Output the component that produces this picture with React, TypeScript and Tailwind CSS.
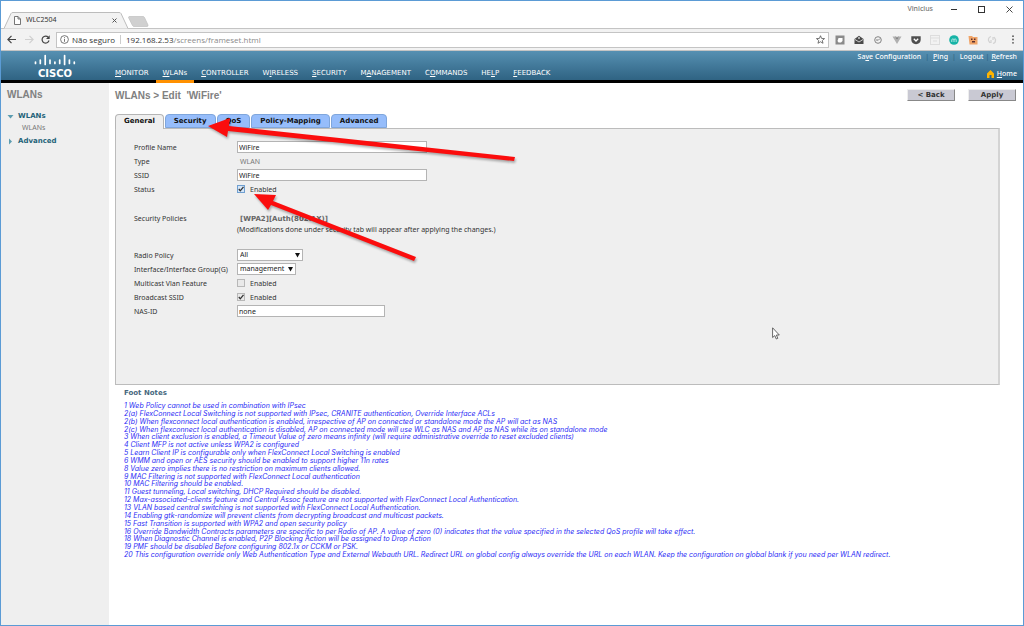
import { useState } from "react";
import type { ReactNode } from "react";

const navItems = [
  { before: "", key: "M", after: "ONITOR" },
  { before: "", key: "W", after: "LANs", active: true },
  { before: "", key: "C", after: "ONTROLLER" },
  { before: "W", key: "I", after: "RELESS" },
  { before: "", key: "S", after: "ECURITY" },
  { before: "M", key: "A", after: "NAGEMENT" },
  { before: "C", key: "O", after: "MMANDS" },
  { before: "HE", key: "L", after: "P" },
  { before: "", key: "F", after: "EEDBACK" },
];

const tabs = ["General", "Security", "QoS", "Policy-Mapping", "Advanced"];

const footNotes = [
  "1 Web Policy cannot be used in combination with IPsec",
  "2(a) FlexConnect Local Switching is not supported with IPsec, CRANITE authentication, Override Interface ACLs",
  "2(b) When flexconnect local authentication is enabled, irrespective of AP on connected or standalone mode the AP will act as NAS",
  "2(c) When flexconnect local authentication is disabled, AP on connected mode will use WLC as NAS and AP as NAS while its on standalone mode",
  "3 When client exclusion is enabled, a Timeout Value of zero means infinity (will require administrative override to reset excluded clients)",
  "4 Client MFP is not active unless WPA2 is configured",
  "5 Learn Client IP is configurable only when FlexConnect Local Switching is enabled",
  "6 WMM and open or AES security should be enabled to support higher 11n rates",
  "8 Value zero implies there is no restriction on maximum clients allowed.",
  "9 MAC Filtering is not supported with FlexConnect Local authentication",
  "10 MAC Filtering should be enabled.",
  "11 Guest tunneling, Local switching, DHCP Required should be disabled.",
  "12 Max-associated-clients feature and Central Assoc feature are not supported with FlexConnect Local Authentication.",
  "13 VLAN based central switching is not supported with FlexConnect Local Authentication.",
  "14 Enabling gtk-randomize will prevent clients from decrypting broadcast and multicast packets.",
  "15 Fast Transition is supported with WPA2 and open security policy",
  "16 Override Bandwidth Contracts parameters are specific to per Radio of AP. A value of zero (0) indicates that the value specified in the selected QoS profile will take effect.",
  "18 When Diagnostic Channel is enabled, P2P Blocking Action will be assigned to Drop Action",
  "19 PMF should be disabled Before configuring 802.1x or CCKM or PSK.",
  "20 This configuration override only Web Authentication Type and External Webauth URL. Redirect URL on global config always override the URL on each WLAN. Keep the configuration on global blank if you need per WLAN redirect.",
];

const TitleBar = () => (
  <div className="flex h-[27px] justify-between">
    <div className="flex items-end">
      <div className="relative z-10 -mb-px ml-[3px] h-[17px] w-[124px]">
        <svg className="absolute inset-0" width="124" height="17" viewBox="0 0 124 17">
          <path d="M0 16.5 L7 1.5 Q7.500 .5 9 .5 H115 Q116.500 .5 117 1.500 L124 16.500" fill="#f2f2f2" stroke="#bcbcbc" />
        </svg>
        <div className="relative flex h-full items-center pl-[10px] pr-[11px]">
          <svg width="7" height="9" viewBox="0 0 7 9" fill="#fff" stroke="#666" strokeWidth=".9">
            <path d="M.5 .5 H4 L6.500 3 V8.500 H.5 Z M4 .5 V3 H6.500" />
          </svg>
          <span className="ml-[5px] flex-1 text-[7px] text-[#333]">WLC2504</span>
          <button type="button" aria-label="Close tab">
            <svg width="5" height="5" viewBox="0 0 5 5" stroke="#555">
              <path d="M.5 .5 L4.500 4.500 M4.500 .5 L.5 4.500" />
            </svg>
          </button>
        </div>
      </div>
      <button type="button" aria-label="New tab" className="mb-[1px]">
        <svg width="21" height="11" viewBox="0 0 21 11">
          <path d="M1 .5 H15 Q16 .5 16.500 1.500 L20 9 Q20.300 10.500 19 10.500 H6 Q5 10.500 4.500 9.500 L.5 1.500 Z" fill="#d0d0d0" stroke="#c0c0c0" strokeWidth=".7" />
        </svg>
      </button>
    </div>
    <div className="flex h-[17px] items-center pr-[10px] text-[#333]">
      <span className="mr-[18px] text-[7px] font-medium text-[#777]">Vinicius</span>
      <button type="button" aria-label="Minimize" className="mr-[21px]">
        <svg width="6" height="7" viewBox="0 0 6 7" stroke="#333"><path d="M0 3.500 H6" /></svg>
      </button>
      <button type="button" aria-label="Maximize" className="mr-[21px]">
        <svg width="7" height="7" viewBox="0 0 7 7" stroke="#333" fill="none"><rect x=".5" y=".5" width="6" height="6" /></svg>
      </button>
      <button type="button" aria-label="Close">
        <svg width="7" height="7" viewBox="0 0 7 7" stroke="#333" strokeWidth=".9"><path d="M.5 .5 L6.500 6.500 M6.500 .5 L.5 6.500" /></svg>
      </button>
    </div>
  </div>
);

const extensions: { name: string; art: ReactNode }[] = [
  {
    name: "Notes",
    art: (
      <>
        <rect x=".5" y=".5" width="9" height="9" fill="#8a8a8a" />
        <path d="M3.500 3 H7.500 V6 L6 7.500 H3.500 L2.500 6 Z" fill="#fff" />
      </>
    ),
  },
  {
    name: "Mail",
    art: (
      <>
        <path d="M.5 4 L5 .8 L9.500 4 V9 H.5 Z" fill="#4a4a4a" />
        <path d="M1 4.500 L5 7 L9 4.500" stroke="#eee" strokeWidth=".8" fill="none" />
        <circle cx="5" cy="3" r="1" fill="#ccc" />
      </>
    ),
  },
  {
    name: "Speed",
    art: (
      <g fill="none" stroke="#777" strokeWidth=".9">
        <circle cx="5" cy="5" r="3.300" />
        <path d="M5 5.500 L7 3.500 M3 5 H5" />
      </g>
    ),
  },
  {
    name: "Vue",
    art: (
      <>
        <path d="M.5 1.500 H3 L5 5 L7 1.500 H9.500 L5 9 Z" fill="#b0b0b0" />
        <path d="M3 1.500 H4.200 L5 3 L5.800 1.500 H7 L5 5 Z" fill="#777" />
      </>
    ),
  },
  {
    name: "Pocket",
    art: (
      <>
        <path d="M.3 1.300 H9.700 V5 Q9.300 8.800 5 9.200 Q.7 8.800 .3 5 Z" fill="#4f4f4f" />
        <path d="M2.800 3.800 L5 6 L7.200 3.800" stroke="#fff" strokeWidth="1.300" fill="none" />
      </>
    ),
  },
  {
    name: "Calendar",
    art: (
      <g fill="none" stroke="#ddd">
        <rect x=".5" y=".5" width="9" height="9" />
        <path d="M.5 3 H9.500 M3 6 H7" />
      </g>
    ),
  },
  {
    name: "Momentum",
    art: (
      <>
        <circle cx="5" cy="5" r="4.800" fill="#16b3a6" />
        <path d="M2.800 7 V4.500 Q3.900 3.200 5 4.500 V7 M5 4.500 Q6.100 3.200 7.200 4.500 V7" stroke="#d8f5f2" strokeWidth=".8" fill="none" />
      </>
    ),
  },
  {
    name: "Avatar",
    art: (
      <>
        <path d="M.5 1 H4 L5 2 H9.500 V9.500 H1.500 Z" fill="#f0a468" />
        <path d="M3 3.500 H4.500 V5 H3 Z M6 3.500 H7.500 V5 H6 Z M4 6 H7 V7.500 H4 Z" fill="#5a3030" />
      </>
    ),
  },
  {
    name: "Sync",
    art: (
      <path d="M4 1.500 Q1 2.500 1.500 5.500 L3 8 M6 8.500 Q9 7.500 8.500 4.500 L7 2 M6 2 V5 M4 5 V8" stroke="#d2d2d2" strokeWidth="1.200" fill="none" />
    ),
  },
];

const AddressBar = () => (
  <div className="flex h-[23px] items-center border-y border-[#c4c4c4] bg-[#f2f2f2] pl-[6px] pr-[8px]">
    <button type="button" aria-label="Back" className="mr-[9px]">
      <svg width="9" height="9" viewBox="0 0 9 9" stroke="#444" strokeWidth="1.200" fill="none"><path d="M9 4.500 H1 M4.500 .8 L.9 4.500 L4.500 8.200" /></svg>
    </button>
    <button type="button" aria-label="Forward" className="mr-[7px]">
      <svg width="9" height="9" viewBox="0 0 9 9" stroke="#d0d0d0" strokeWidth="1.200" fill="none"><path d="M0 4.500 H8 M4.500 .8 L8.100 4.500 L4.500 8.200" /></svg>
    </button>
    <button type="button" aria-label="Reload" className="mr-[6px]">
      <svg width="9" height="9" viewBox="0 0 9 9" fill="none">
        <path d="M7.300 2.300 A3.500 3.500 0 1 0 8 5.500" stroke="#444" strokeWidth="1.200" />
        <path d="M8.700 .3 V4 H5 Z" fill="#444" />
      </svg>
    </button>
    <div className="flex h-[16px] flex-1 items-center border border-[#c4c4c4] bg-white px-[3px] font-['Open_Sans',sans-serif] text-[8px] text-[#333]">
      <svg className="mr-[3px]" width="9" height="9" viewBox="0 0 9 9" fill="none" stroke="#555" strokeWidth=".8">
        <circle cx="4.500" cy="4.500" r="3.900" />
        <path d="M4.500 4 V6.800 M4.500 2.200 V3.200" />
      </svg>
      <span>Não seguro</span>
      <span className="mx-[5px] h-[9px] border-l border-[#ccc]" />
      <span className="flex-1">
        192.168.2.53<span className="text-[#8a8a8a]">/screens/frameset.html</span>
      </span>
      <svg width="9" height="9" viewBox="0 0 10 10" fill="none" stroke="#555" strokeWidth=".9">
        <path d="M5 .8 L6.200 3.800 L9.500 4 L7 6.100 L7.800 9.200 L5 7.500 L2.200 9.200 L3 6.100 L.5 4 L3.800 3.800 Z" />
      </svg>
    </div>
    <div className="ml-[6px] flex items-center gap-[9px]">
      {extensions.map(ext => (
        <button type="button" key={ext.name} aria-label={ext.name}>
          <svg width="10" height="10" viewBox="0 0 10 10">{ext.art}</svg>
        </button>
      ))}
      <button type="button" aria-label="Menu" className="ml-[5px]">
        <svg width="4" height="9" viewBox="0 0 4 9" fill="#555">
          <circle cx="2" cy="1.200" r=".9" />
          <circle cx="2" cy="4.500" r=".9" />
          <circle cx="2" cy="7.800" r=".9" />
        </svg>
      </button>
    </div>
  </div>
);

const CiscoLogo = () => (
  <svg width="42" height="26" viewBox="0 0 42 26">
    <g stroke="#fff" strokeWidth="1.700" strokeLinecap="round">
      <path d="M1.500 8 V9.500 M6.300 6 V9.500 M11.200 1.500 V10.500 M16 6 V9.500 M20.900 8 V9.500 M25.700 6 V9.500 M30.600 1.500 V10.500 M35.400 6 V9.500 M40.300 8 V9.500" />
    </g>
    <text x="21" y="23" textAnchor="middle" fill="#fff" className="font-['DejaVu_Sans',sans-serif] text-[10px] font-bold">
      CISCO
    </text>
  </svg>
);

const Header = () => (
  <header className="flex h-[32px] justify-between border-b-3 border-black bg-linear-to-b from-[#5690b2] to-[#2b5f7e] bg-origin-border text-white">
    <div className="flex">
      <a href="#home" aria-label="Cisco" className="ml-[33px] mr-[32px] mt-[3px] h-[26px]">
        <CiscoLogo />
      </a>
      <nav className="-mb-[3px] flex items-end font-['DejaVu_Sans',sans-serif]">
        {navItems.map(({ before, key, after, active }) => (
          <a
            key={before + key + after}
            href={`#${(before + key + after).toLowerCase()}`}
            className={
              active
                ? "border-b-3 border-[#ff9000] px-[7px] pb-[2px] text-[7px] leading-[10px] font-medium"
                : "border-b-3 border-transparent px-[7px] pb-[2px] text-[7px] leading-[10px] font-medium"
            }>
            {before}
            <u>{key}</u>
            {after}
          </a>
        ))}
      </nav>
    </div>
    <div className="flex flex-col items-end justify-between pr-[6px] pt-[1px] pb-[1px] text-[7px] leading-[10px] font-medium">
      <div className="flex">
        <a href="#save">Sa<u>v</u>e Configuration</a>
        <span className="px-[4px] text-[#2f6484]">|</span>
        <a href="#ping"><u>P</u>ing</a>
        <span className="px-[4px] text-[#2f6484]">|</span>
        <a href="#logout">Logout</a>
        <span className="px-[2px] text-[#2f6484]">|</span>
        <a href="#refresh"><u>R</u>efresh</a>
      </div>
      <a href="#home" className="flex items-center gap-[3px]">
        <svg width="7" height="8" viewBox="0 0 7 8"><path d="M3.500 0 L7 3.500 V8 H4.500 V5 H2.500 V8 H0 V3.500 Z" fill="#ffb400" /></svg>
        <span><u>H</u>ome</span>
      </a>
    </div>
  </header>
);

const Sidebar = () => (
  <aside className="w-[108px] shrink-0 bg-[#efefef] pl-[6px] pt-[5px]">
    <h2 className="font-['Liberation_Sans',sans-serif] text-[10px] leading-[14px] font-bold text-[#808080]">WLANs</h2>
    <ul className="mt-[8px] font-['DejaVu_Sans',sans-serif]">
      <li>
        <a href="#wlans" className="flex items-center text-[7px] leading-[13px] font-bold text-[#1f6379]">
          <svg className="mr-[4px]" width="7" height="7" viewBox="0 0 7 7"><path d="M.5 2 H6.500 L3.500 5.500 Z" fill="#5c9cb0" /></svg>
          WLANs
        </a>
        <a href="#wlans-list" className="ml-[15px] block font-['Noto_Sans',sans-serif] text-[7px] leading-[9px] text-[#777]">WLANs</a>
      </li>
      <li className="mt-[3px]">
        <a href="#advanced" className="flex items-center text-[7px] leading-[13px] font-bold text-[#1f6379]">
          <svg className="mr-[4px]" width="7" height="7" viewBox="0 0 7 7"><path d="M2 .5 V6.500 L5 3.500 Z" fill="#5c9cb0" /></svg>
          Advanced
        </a>
      </li>
    </ul>
  </aside>
);

const Row = ({ label, htmlFor, children }: { label: string; htmlFor?: string; children: ReactNode }) => (
  <div className="flex h-[14px] items-center">
    {htmlFor ? (
      <label htmlFor={htmlFor} className="w-[103px] shrink-0 pt-[2px]">{label}</label>
    ) : (
      <span className="w-[103px] shrink-0 pt-[2px]">{label}</span>
    )}
    {children}
  </div>
);

const TextField = ({ id, value, className }: { id: string; value: string; className: string }) => (
  <input id={id} type="text" defaultValue={value} className={`h-[12px] border border-[#b4b4b4] bg-white px-px text-[#222] ${className}`} />
);

const Checkbox = ({ id, checked, focused }: { id: string; checked?: boolean; focused?: boolean }) => (
  <span className="flex items-center">
    <span className="relative mr-[5px] flex size-[8px]">
      <input
        id={id}
        type="checkbox"
        defaultChecked={checked}
        className={
          focused
            ? "peer size-[8px] appearance-none border border-[#6f9fd0] bg-[#d5e6f8]"
            : "peer size-[8px] appearance-none border border-[#b8b8b8] bg-[#e9e9e9]"
        }
      />
      <svg className="pointer-events-none absolute inset-0 hidden peer-checked:block" width="8" height="8" viewBox="0 0 8 8">
        <path d="M1.800 4 L3.300 5.800 L6.500 1.800" stroke="#333" strokeWidth="1.300" fill="none" />
      </svg>
    </span>
    <span className="pt-[2px]">Enabled</span>
  </span>
);

const Select = ({ id, value, className }: { id: string; value: string; className: string }) => (
  <span className={`relative flex ${className}`}>
    <select id={id} defaultValue={value} className="h-[12px] w-full appearance-none border border-[#b4b4b4] bg-white pl-[2px] text-[#222]">
      <option>{value}</option>
    </select>
    <svg className="pointer-events-none absolute right-[3px] top-[4px]" width="5" height="5" viewBox="0 0 5 5"><path d="M0 0 H5 L2.500 4.500 Z" fill="#111" /></svg>
  </span>
);

const GeneralForm = () => (
  <form className="pl-[18px] pt-[11px] text-[7px] leading-[10px] text-[#333]">
    <Row label="Profile Name" htmlFor="profile"><TextField id="profile" value="WiFire" className="w-[190px]" /></Row>
    <Row label="Type"><span className="pl-[3px] pt-[2px] text-[#777]">WLAN</span></Row>
    <Row label="SSID" htmlFor="ssid"><TextField id="ssid" value="WiFire" className="w-[190px]" /></Row>
    <Row label="Status" htmlFor="status"><Checkbox id="status" checked focused /></Row>
    <div className="mt-[15px] mb-[13px]">
      <Row label="Security Policies">
        <span className="pl-[3px] pt-[2px] font-['DejaVu_Sans',sans-serif] font-bold text-[#666]">[WPA2][Auth(802.1X)]</span>
      </Row>
      <p className="ml-[103px]">(Modifications done under security tab will appear after applying the changes.)</p>
    </div>
    <Row label="Radio Policy" htmlFor="radio"><Select id="radio" value="All" className="w-[66px]" /></Row>
    <Row label="Interface/Interface Group(G)" htmlFor="interface"><Select id="interface" value="management" className="w-[59px]" /></Row>
    <Row label="Multicast Vlan Feature" htmlFor="multicast"><Checkbox id="multicast" /></Row>
    <Row label="Broadcast SSID" htmlFor="broadcast"><Checkbox id="broadcast" checked /></Row>
    <Row label="NAS-ID" htmlFor="nas"><TextField id="nas" value="none" className="w-[148px]" /></Row>
  </form>
);

// red call-out arrows and the mouse pointer, over the form
const Annotations = () => (
  <>
    <svg className="pointer-events-none absolute left-[92px] top-[-15px] z-20" width="320" height="160" viewBox="0 0 320 160">
      <g className="drop-shadow-[1px_2px_1px_rgba(0,0,0,0.3)]" fill="#fb0d0d">
        <path d="M0 12 L22 4 L21 12 L307 43 L306 47 L20 17 L19 23 Z" />
        <path d="M46 80 L68 81 L65 87 L208 143 L206 147 L63 91 L60 96 Z" />
      </g>
    </svg>
    <svg className="pointer-events-none absolute left-[656px] top-[198px]" width="8" height="13" viewBox="0 0 8 13">
      <path d="M.6 .8 V10.500 L2.800 8.600 L4.300 12 L5.800 11.300 L4.400 8 H7.300 Z" fill="#fff" stroke="#444" strokeWidth=".8" />
    </svg>
  </>
);

export default function App() {
  const [activeTab, setActiveTab] = useState("General");

  return (
    <div className="flex min-h-screen flex-col border border-[#5b9bd5] bg-white font-['Noto_Sans',sans-serif]">
      <TitleBar />
      <AddressBar />
      <Header />
      <div className="flex flex-1">
        <Sidebar />
        <main className="min-w-0 flex-1 pl-[6px] pt-[6px]">
          <div className="flex items-start justify-between pr-[7px]">
            <h1 className="font-['Liberation_Sans',sans-serif] text-[10px] leading-[13px] font-bold whitespace-pre text-[#808080]">
              {"WLANs > Edit  'WiFire'"}
            </h1>
            <div className="flex gap-[13px] font-['DejaVu_Sans',sans-serif] text-[7px] leading-[9px] font-bold text-[#333]">
              <button type="button" className="h-[12px] w-[48px] border border-t-[#eee] border-r-[#888] border-b-[#888] border-l-[#eee] bg-[#c9c9d3]">&lt; Back</button>
              <button type="button" className="h-[12px] w-[48px] border border-t-[#eee] border-r-[#888] border-b-[#888] border-l-[#eee] bg-[#c9c9d3]">Apply</button>
            </div>
          </div>
          <div role="tablist" className="relative z-10 -mb-px mt-[12px] flex gap-px font-['DejaVu_Sans',sans-serif] text-[7px] leading-[13px] font-bold text-[#111]">
            {tabs.map(tab => (
              <button
                type="button"
                role="tab"
                key={tab}
                aria-selected={tab === activeTab}
                onClick={() => setActiveTab(tab)}
                className={
                  tab === activeTab
                    ? "h-[15px] rounded-t-[4px] border border-b-0 border-[#b5b5b5] bg-[#efefef] px-[8px] pb-[2px]"
                    : "h-[14px] rounded-t-[4px] border border-[#7fa6dc] bg-[#96bdfb] px-[8px]"
                }>
                {tab}
              </button>
            ))}
          </div>
          <section className="relative mr-[23px] h-[257px] border border-r-2 border-[#bcbcbc] border-r-[#d4d4d4] bg-[#efefef]">
            <GeneralForm />
            <Annotations />
          </section>
          <section className="pl-[9px] pt-[4px]">
            <h3 className="font-['DejaVu_Sans',sans-serif] text-[7px] leading-[9px] font-bold text-[#47687e]">Foot Notes</h3>
            <ol className="mt-[4px] grid h-[157px] auto-rows-fr font-['Inter',sans-serif] text-[7px] leading-[7px] whitespace-nowrap text-[#2a2af5] italic">
              {footNotes.map(note => (
                <li key={note}>{note}</li>
              ))}
            </ol>
          </section>
        </main>
      </div>
    </div>
  );
}
